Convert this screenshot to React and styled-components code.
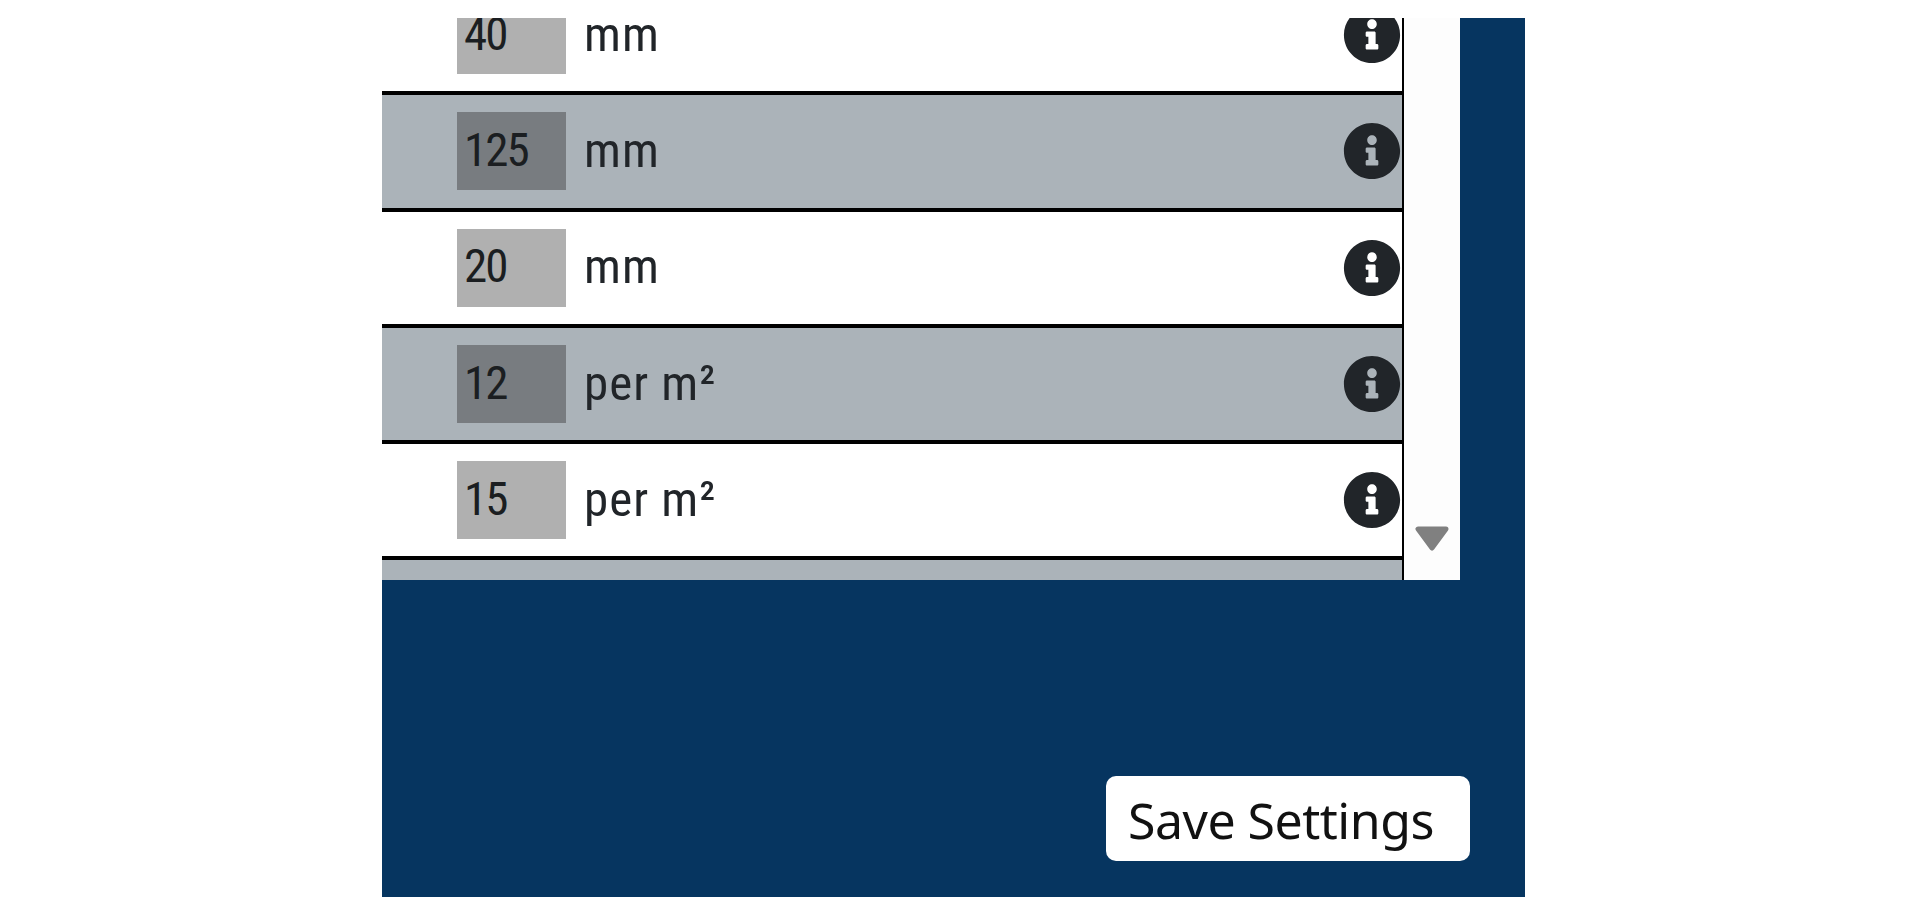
import styled, { createGlobalStyle } from 'styled-components';
import { FaInfoCircle } from 'react-icons/fa';

const GlobalStyle = createGlobalStyle`
  html, body {
    margin: 0;
    background: #fff;
  }
`;

const Panel = styled.main`
  box-sizing: border-box;
  width: 1143px;
  height: 879px;
  margin: 18px 0 0 382px;
  background: #063560;
  display: flex;
  flex-direction: column;
`;

const Settings = styled.section`
  width: 1078px;
  height: 562px;
  display: flex;
  overflow: hidden;
`;

const List = styled.div`
  width: 1020px;
  border-right: 2px solid #000;
  box-sizing: content-box;
  overflow: hidden;
`;

const Rows = styled.div`
  margin-top: -39px;
`;

const Row = styled.div`
  box-sizing: border-box;
  height: 116.3px;
  padding: 0 1px 0 75px;
  border-bottom: 4px solid #000;
  background: ${(p) => (p.$shaded ? '#abb3b9' : '#fff')};
  color: #212529;
  display: flex;
  align-items: center;
  font-family: Roboto, "Liberation Sans", sans-serif;
`;

const Value = styled.input`
  box-sizing: border-box;
  width: 109px;
  height: 78px;
  padding: 0 0 4px 7px;
  border: 0;
  outline: 0;
  background: ${(p) => (p.$shaded ? '#787c80' : '#b0b0b0')};
  color: #1b1e21;
  font-family: inherit;
  font-size: 47px;
  font-stretch: 75%;
  letter-spacing: -2px;
`;

const Unit = styled.span`
  margin-left: 18px;
  padding-bottom: 2px;
  font-size: 49px;
  font-stretch: 75%;
  letter-spacing: 1px;
`;

const InfoIcon = styled(FaInfoCircle)`
  margin-left: auto;
  width: 58px;
  height: 58px;
  color: #212529;
`;

const Scrollbar = styled.div`
  width: 56px;
  background: #fdfdfd;
  display: flex;
  justify-content: center;
  align-items: flex-end;
  padding-bottom: 29px;
  box-sizing: border-box;
`;

const Footer = styled.footer`
  flex: 1;
  display: flex;
  justify-content: flex-end;
  align-items: flex-end;
  padding: 0 55px 36px 0;
`;

const SaveButton = styled.button`
  box-sizing: border-box;
  width: 364px;
  height: 85px;
  padding: 2px 0 0 22px;
  border: 0;
  border-radius: 10px;
  background: #fff;
  color: #111;
  text-align: left;
  font: 50px "Noto Sans", "Open Sans", sans-serif;
  letter-spacing: -0.5px;
`;

const rows = [
  { value: '40', unit: 'mm' },
  { value: '125', unit: 'mm' },
  { value: '20', unit: 'mm' },
  { value: '12', unit: 'per m²' },
  { value: '15', unit: 'per m²' },
];

const App = () => (
  <Panel>
    <GlobalStyle />
    <Settings>
      <List>
        <Rows>
          {rows.map((row, i) => (
            <Row key={row.value} $shaded={i % 2 === 1}>
              <Value readOnly value={row.value} $shaded={i % 2 === 1} />
              <Unit>{row.unit}</Unit>
              <InfoIcon />
            </Row>
          ))}
          <Row $shaded />
        </Rows>
      </List>
      <Scrollbar>
        <svg width="36" height="25" viewBox="0 0 36 25">
          <path d="M4 3h28L18 22z" fill="#808080" stroke="#808080" strokeWidth="5" strokeLinejoin="round" />
        </svg>
      </Scrollbar>
    </Settings>
    <Footer>
      <SaveButton>Save Settings</SaveButton>
    </Footer>
  </Panel>
);

export default App;
